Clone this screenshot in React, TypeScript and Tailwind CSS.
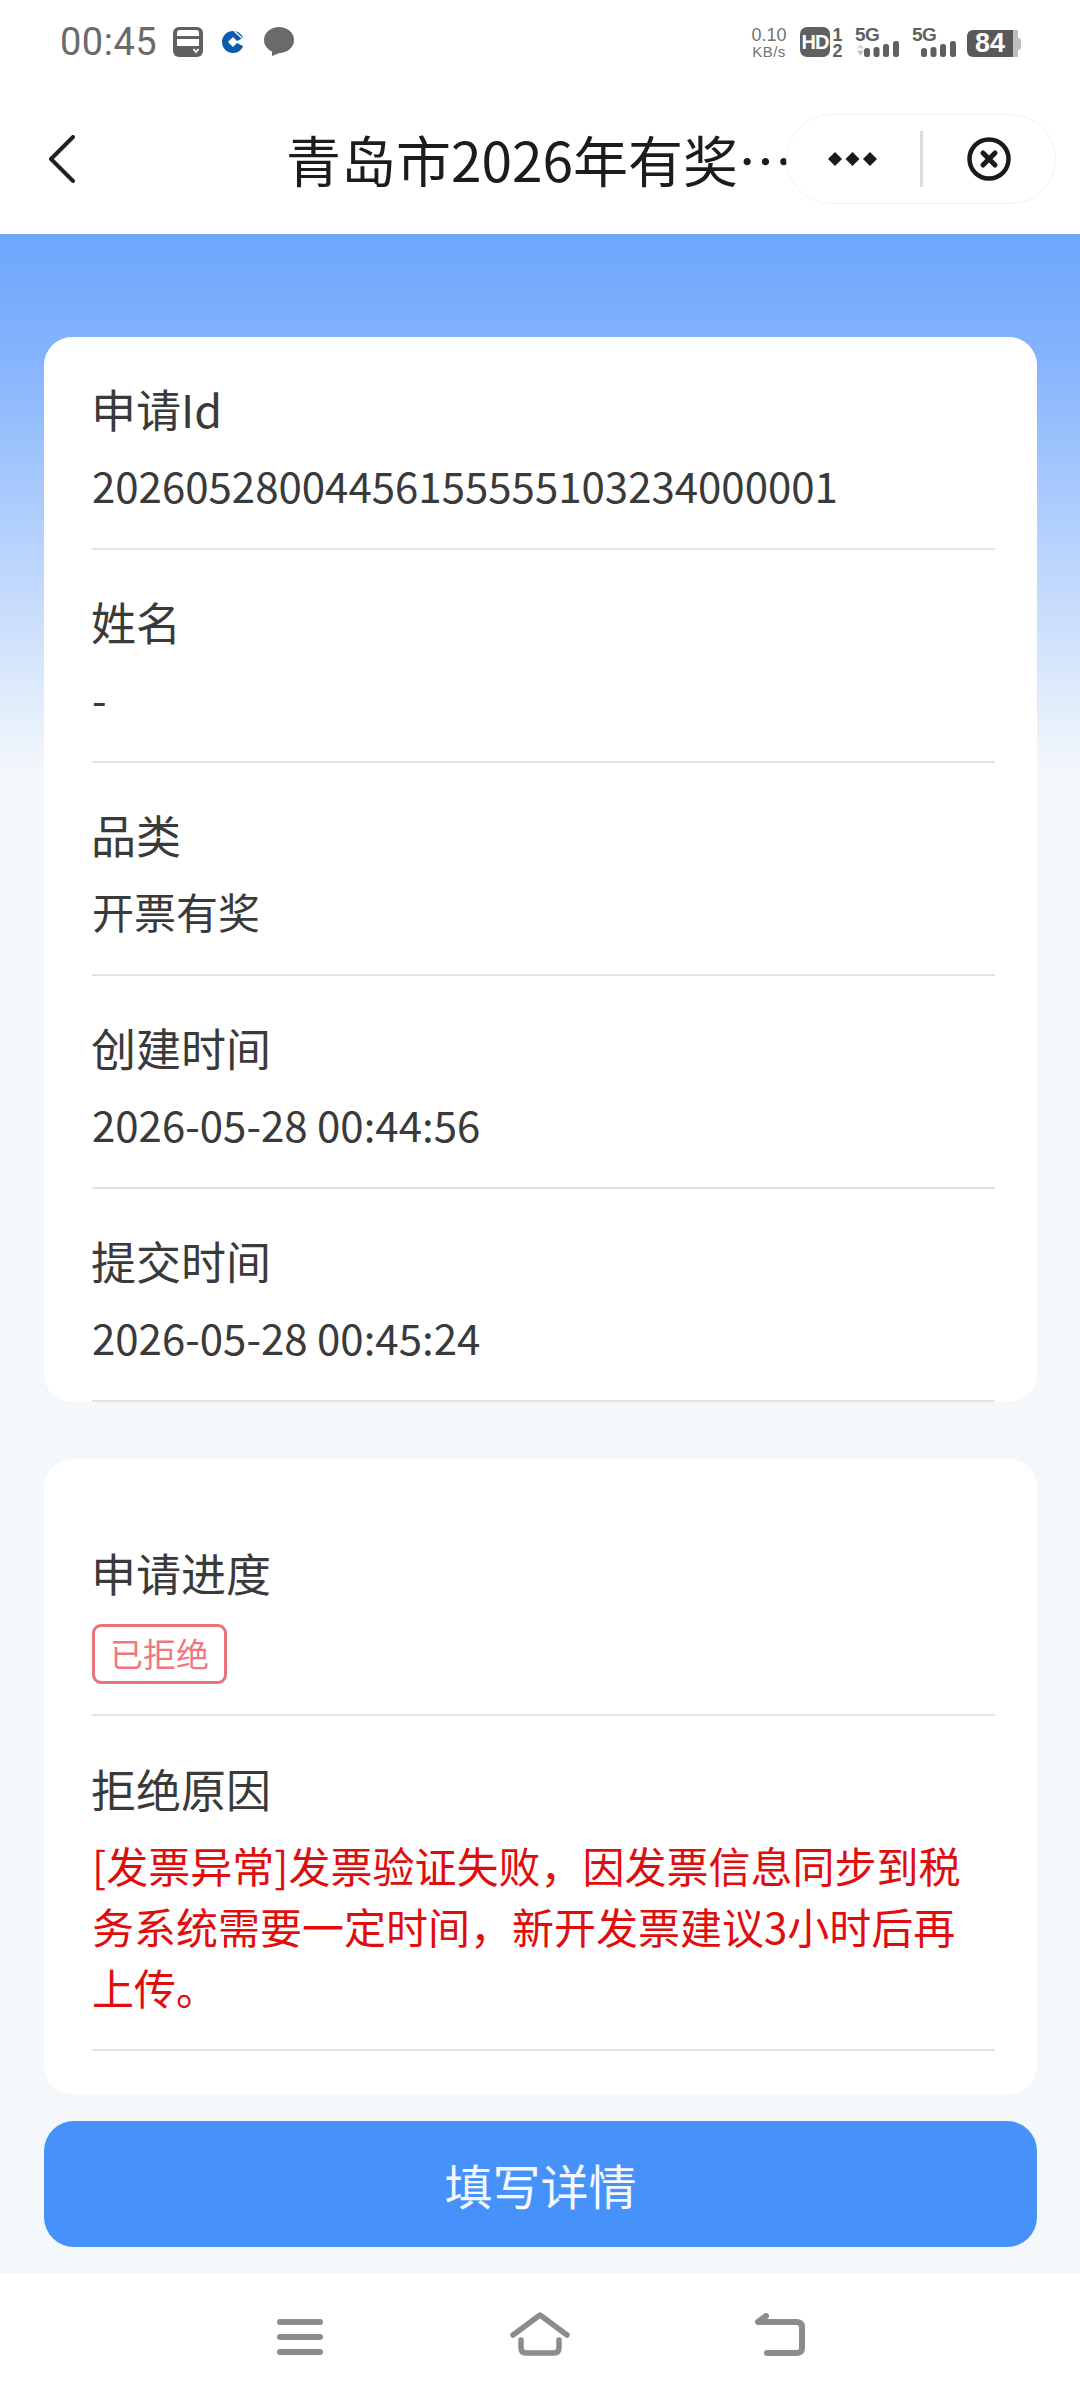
import React from 'react';

const rows = [
  { label: '申请Id', value: '20260528004456155555103234000001' },
  { label: '姓名', value: '-' },
  { label: '品类', value: '开票有奖' },
  { label: '创建时间', value: '2026-05-28 00:44:56' },
  { label: '提交时间', value: '2026-05-28 00:45:24' },
];

const Signal = ({ arrows }: { arrows?: boolean }) => (
  <div className="flex flex-col w-[44px] mt-[1px]">
    <span className="text-[19px] leading-[13px] font-bold text-[#606060] tracking-[-0.5px] font-['Liberation_Sans',sans-serif]">5G</span>
    <svg width="44" height="16" viewBox="0 0 44 16">
      {arrows && <path d="M5.5 3 L9 7.5 H2 Z" fill="#d8d8d8" />}
      {arrows && <path d="M5.5 15 L9 9.5 H2 Z" fill="#c4c4c4" />}
      <rect x="9" y="7" width="6" height="9" rx="2.5" fill="#606060" />
      <rect x="18.5" y="6" width="6" height="10" rx="2.5" fill="#606060" />
      <rect x="28" y="3" width="6" height="13" rx="2.5" fill="#606060" />
      <rect x="38" y="0" width="6" height="16" rx="2.5" fill="#606060" />
    </svg>
  </div>
);

const StatusBar = () => (
  <div className="h-[78px] flex items-start justify-between pl-[60px] pr-[59px] pt-[27px] font-['Roboto',sans-serif]">
    <div className="flex items-center h-[30px]">
      <span className="text-[38px] leading-[30px] text-[#6a6a6a] tracking-[0.5px]">00:45</span>
      <svg width="30" height="30" viewBox="0 0 30 30" className="ml-[16px]">
        <rect width="30" height="30" rx="6" fill="#606060" />
        <path d="M4 19 V6 Q4 3 7 3 H23 Q26 3 26 6 V19 Z" fill="#fff" />
        <rect x="4" y="9" width="22" height="3" fill="#606060" />
        <path d="M20.5 22 l2.5 3 l2.5 -3" stroke="#fff" strokeWidth="1.8" fill="none" />
      </svg>
      <svg width="22" height="22" viewBox="0 0 22 22" className="ml-[19px]">
        <circle cx="11" cy="11" r="11" fill="#0b5cad" />
        <path d="M11 6 L16 11 L11 16 L6 11 Z" fill="#fff" />
        <path d="M13 11 L22 6.5 V15.5 Z" fill="#fff" />
        <path d="M12 0 L21 8" stroke="#fff" strokeWidth="1.4" />
      </svg>
      <svg width="30" height="30" viewBox="0 0 30 30" className="ml-[20px]">
        <ellipse cx="15" cy="13" rx="15" ry="13" fill="#6a6a6a" />
        <path d="M8 22 L8 29 L18 25 Z" fill="#6a6a6a" />
      </svg>
    </div>
    <div className="flex items-start h-[30px]">
      <div className="flex flex-col items-center w-[36px] text-[#737373] font-['Liberation_Sans',sans-serif] mr-[13px]">
        <span className="text-[18px] leading-[17px]">0.10</span>
        <span className="text-[15px] leading-[14px] tracking-[0.5px] mt-[1px]">KB/s</span>
      </div>
      <div className="w-[30px] h-[30px] rounded-[7px] bg-[#606060] flex items-center justify-center text-white text-[20px] font-bold font-['Liberation_Sans',sans-serif] tracking-[-1px]">HD</div>
      <div className="flex flex-col w-[13px] ml-[1px] text-[#606060] text-[18px] leading-[16px] font-bold font-['Liberation_Sans',sans-serif] items-center mr-[11px]">
        <span>1</span>
        <span>2</span>
      </div>
      <Signal arrows />
      <div className="w-[13px]" />
      <Signal />
      <div className="w-[11px]" />
      <div className="flex items-center mt-[3px]">
        <div className="w-[46px] h-[27px] rounded-l-[6px] bg-[#595959] flex items-center justify-center text-white text-[27px] font-bold font-['Liberation_Sans',sans-serif]">84</div>
        <div className="w-[5px] h-[27px] bg-[#bdbdbd]" />
        <div className="w-[3px] h-[12px] rounded-r-[3px] bg-[#bdbdbd]" />
      </div>
    </div>
  </div>
);

const NavBar = () => (
  <div className="relative h-[156px] flex items-start">
    <svg width="28" height="48" viewBox="0 0 28 48" className="absolute left-[48px] top-[57px]" fill="none" stroke="#222" strokeWidth="4" strokeLinecap="round" strokeLinejoin="round">
      <path d="M25 2 L3 24 L25 46" />
    </svg>
    <div className="ml-[286px] mt-[45px] h-[70px] leading-[70px] text-[55px] text-[#1c1c1c] whitespace-nowrap">
      青岛市2026年有奖…
    </div>
    <div className="absolute left-[786px] top-[36px] w-[270px] h-[90px] rounded-full bg-white border border-[#f2f2f2] flex items-center">
      <svg width="49" height="14" viewBox="0 0 49 14" className="ml-[41px]" fill="#1a1a1a">
        <path d="M7 0 L14 7 L7 14 L0 7 Z" />
        <path d="M24.5 0 L31.5 7 L24.5 14 L17.5 7 Z" />
        <path d="M42 0 L49 7 L42 14 L35 7 Z" />
      </svg>
      <div className="ml-[43px] w-[3px] h-[56px] bg-[#dcdcdc]" />
      <svg width="44" height="44" viewBox="0 0 44 44" className="ml-[44px]" fill="none" stroke="#1a1a1a">
        <circle cx="22" cy="22" r="19.5" strokeWidth="4.5" />
        <path d="M16 16 L28 28 M28 16 L16 28" strokeWidth="5" strokeLinecap="round" />
      </svg>
    </div>
  </div>
);

const BottomNav = () => (
  <div className="h-[127px] bg-white flex justify-center items-start pt-[45px]">
    <div className="w-[240px] flex justify-center">
      <svg width="46" height="38" viewBox="0 0 46 38" fill="none" stroke="#8c8c8c" strokeWidth="6" strokeLinecap="round">
        <path d="M3 4 H43 M3 19 H43 M3 34 H43" />
      </svg>
    </div>
    <div className="w-[240px] flex justify-center mt-[-6px]">
      <svg width="60" height="44" viewBox="0 0 60 44" fill="none" stroke="#8c8c8c" strokeWidth="5.5" strokeLinecap="round" strokeLinejoin="round">
        <path d="M3 23 L30 3 L57 23" />
        <path d="M11 28 V36 Q11 41 16 41 H44 Q49 41 49 36 V28" />
      </svg>
    </div>
    <div className="w-[240px] flex justify-center mt-[-5px]">
      <svg width="50" height="43" viewBox="0 0 50 43" fill="none" stroke="#8c8c8c" strokeWidth="6" strokeLinecap="round" strokeLinejoin="round">
        <path d="M11 3 L3 9 H41 Q47 9 47 14 V35 Q47 40 41 40 H12" />
      </svg>
    </div>
  </div>
);

export default function App() {
  return (
    <div className="w-[1080px] h-[2400px] flex flex-col bg-[#f4f8fb] font-['Noto_Sans_CJK_SC','Noto_Sans',sans-serif] overflow-hidden">
      <div className="bg-white h-[234px] shrink-0">
        <StatusBar />
        <NavBar />
      </div>

      <div className="flex-1 pl-[44px] pr-[43px] pt-[103px] bg-[linear-gradient(to_bottom,#6da6fb_0px,#84b3fd_120px,#f4f8fb_540px)]">
        <div className="bg-white rounded-[28px] pl-[48px] pr-[42px] h-[1065px]">
          {rows.map((row) => (
            <div key={row.label} className="h-[213px] pt-[39px] border-b-2 border-[#e3e3e3]">
              <div className="ml-[-1px] text-[45px] leading-[66px] text-[#3a3a3a]">{row.label}</div>
              <div className="mt-[10px] text-[42px] leading-[66px] text-[#3a3a3a]">{row.value}</div>
            </div>
          ))}
        </div>

        <div className="mt-[57px] bg-white rounded-[28px] pl-[48px] pr-[42px] h-[635px] pt-[81px]">
          <div className="h-[176px] border-b-2 border-[#e3e3e3]">
            <div className="ml-[-1px] text-[45px] leading-[66px] text-[#3a3a3a]">申请进度</div>
            <div className="mt-[18px] w-[135px] h-[60px] border-[3px] border-[#e8737b] rounded-[9px] flex items-center justify-center text-[33px] text-[#f0777f]">
              已拒绝
            </div>
          </div>
          <div className="pt-[40px] h-[335px] border-b-2 border-[#e3e3e3]">
            <div className="ml-[-1px] text-[45px] leading-[66px] text-[#3a3a3a]">拒绝原因</div>
            <div className="mt-[12px] text-[42px] leading-[61px] text-[#e00d0d]">
              [发票异常]发票验证失败，因发票信息同步到税务系统需要一定时间，新开发票建议3小时后再上传。
            </div>
          </div>
        </div>

        <div className="mt-[27px] h-[126px] rounded-[30px] bg-[#4791fb] flex items-center justify-center text-[48px] text-[#f4f8ff]">
          填写详情
        </div>
      </div>

      <BottomNav />
    </div>
  );
}
